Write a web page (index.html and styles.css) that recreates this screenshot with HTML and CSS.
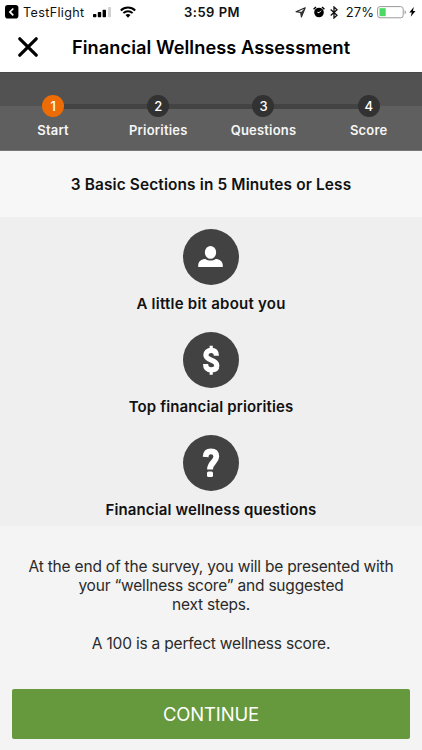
FILE: index.html
```html
<!DOCTYPE html>
<html lang="en">
<head>
<meta charset="utf-8">
<title>Financial Wellness Assessment</title>
<link rel="stylesheet" href="styles.css">
</head>
<body>
<div class="status">
  <div class="status-left">
    <svg class="back" width="14" height="14" viewBox="0 0 14 14"><rect width="13.4" height="13.6" rx="2.8" fill="#000"/><path d="M8.3 3.5 4.9 6.9l3.4 3.4" fill="none" stroke="#fff" stroke-width="1.7"/></svg>
    <span class="app">TestFlight</span>
    <svg class="signal" width="19" height="11" viewBox="0 0 19 11"><rect x="0" y="7" width="3.4" height="3.3" rx=".7"/><rect x="4.8" y="5" width="3.4" height="5.3" rx=".7"/><rect x="9.6" y="2.7" width="3.4" height="7.6" rx=".7"/><rect x="15" y="0" width="3" height="10.3" rx=".7" fill="#d2d2d2"/></svg>
    <svg class="wifi" width="16" height="12" viewBox="0 0 16 12"><g fill="none" stroke="#000" stroke-width="2"><path d="M.8 4.5a10.2 10.2 0 0 1 14.4 0"/><path d="M3.4 7.1a6.5 6.5 0 0 1 9.2 0"/></g><path d="M5.5 9.1a3.6 3.6 0 0 1 5 0L8 11.7z"/></svg>
  </div>
  <div class="time">3:59 PM</div>
  <div class="status-right">
    <svg class="location" width="11" height="11" viewBox="0 0 11 11"><path d="M10.2.8 6.4 10 5.7 5.4 1 4.7z" fill="none" stroke="#222" stroke-width="1.1" stroke-linejoin="round"/><path d="M10.2.8 6.4 10 5.7 5.4z" fill="#333"/></svg>
    <svg class="alarm" width="12" height="12" viewBox="0 0 12 12"><circle cx="6" cy="6.5" r="4.8"/><path d="M.6 3.2 3 1M11.4 3.2 9 1" stroke="#000" stroke-width="1.5"/><path d="M8 4.7 6 6.8 4.4 6.2" fill="none" stroke="#fff" stroke-width="1"/></svg>
    <svg class="bluetooth" width="8" height="13" viewBox="0 0 8 13"><path d="M.7 3.4 7 9.2 4 12V1l3 2.8L.7 9.6" fill="none" stroke="#111" stroke-width="1.3"/></svg>
    <span class="percent">27%</span>
    <svg class="battery" width="30" height="13" viewBox="0 0 30 13"><rect x=".6" y=".6" width="25.6" height="11.2" rx="2.5" fill="#fff" stroke="#999" stroke-width="1"/><rect x="2.5" y="2.2" width="6.2" height="8" fill="#4bd964"/><path d="M27.6 4.2c1.8.8 1.8 3.2 0 4z" fill="#999"/></svg>
    <svg class="bolt" width="7" height="10" viewBox="0 0 7 10"><path d="M4.8 0 .3 5.5h2.5L1.7 9.7 6.5 4H4z"/></svg>
  </div>
</div>
<header class="header">
  <svg class="close" width="20" height="20" viewBox="0 0 20 20"><path d="M1.8 1.8 18.2 18.2M18.2 1.8 1.8 18.2" stroke="#000" stroke-width="3.2" stroke-linecap="round"/></svg>
  <h1>Financial Wellness Assessment</h1>
</header>
<nav class="steps">
  <div class="step active"><span class="dot">1</span><span class="label">Start</span></div>
  <div class="step"><span class="dot">2</span><span class="label">Priorities</span></div>
  <div class="step"><span class="dot">3</span><span class="label">Questions</span></div>
  <div class="step"><span class="dot">4</span><span class="label">Score</span></div>
</nav>
<h2 class="intro">3 Basic Sections in 5 Minutes or Less</h2>
<main class="features">
  <section class="feature">
    <svg width="56" height="56" viewBox="0 0 56 56"><circle cx="28" cy="28" r="28" fill="#424242"/><ellipse cx="27.5" cy="23.4" rx="5.6" ry="6.4" fill="#fff"/><path d="M15.2 38v-1.5c0-4.3 3.3-6.5 7.2-6.5 1.4 1 3.2 1.6 5.1 1.6s3.7-.6 5.1-1.6c3.9 0 7.2 2.2 7.2 6.5V38z" fill="#fff"/></svg>
    <p class="name-about">A little bit about you</p>
  </section>
  <section class="feature">
    <svg width="56" height="56" viewBox="0 0 56 56"><circle cx="28" cy="28" r="28" fill="#424242"/><path d="M33.4 23.8c0-3.6-1.8-5.4-5.2-5.4-3.3 0-5.3 1.8-5.3 4.6 0 6.2 10.9 4.2 10.9 10.5 0 2.8-2 4.4-5.4 4.4-3.7 0-5.8-1.8-5.8-5.8" fill="none" stroke="#fff" stroke-width="5.2"/><path d="M28.2 13.8v4M28.2 38v4.8" stroke="#fff" stroke-width="3.2"/></svg>
    <p class="name-top">Top financial priorities</p>
  </section>
  <section class="feature">
    <svg width="56" height="56" viewBox="0 0 56 56"><circle cx="28" cy="28" r="28" fill="#424242"/><path d="M22.6 22c.2-3.8 2-5.6 5.3-5.6 3.5 0 5.4 1.9 5.4 5.2 0 5.6-6.3 5.6-6.3 12.8" fill="none" stroke="#fff" stroke-width="5.8"/><rect x="24" y="36.6" width="6" height="5.4" rx="1.5" fill="#fff"/></svg>
    <p class="name-questions">Financial wellness questions</p>
  </section>
</main>
<footer class="footer">
  <p class="copy">At the end of the survey, you will be presented with<br>your “wellness score” and suggested<br>next steps.</p>
  <p class="copy perfect">A 100 is a perfect wellness score.</p>
  <button class="continue" type="button">CONTINUE</button>
</footer>
</body>
</html>
```
FILE: styles.css
```css
* { box-sizing: border-box; }
body { margin: 0; height: 750px; overflow: hidden; background: #f4f4f4; color: #111; font-family: Inter, "Liberation Sans", sans-serif; display: flex; flex-direction: column; }
h1, h2, p { margin: 0; white-space: nowrap; }
svg { display: block; flex: none; }
.status { height: 24px; flex: none; background: #fff; display: grid; grid-template-columns: 1fr auto 1fr; align-items: center; padding: 0 6px 0 5px; font-size: 12.6px; color: #111; }
.status-left, .status-right { display: flex; align-items: center; }
.status-right { justify-content: flex-end; }
.app { margin-left: 4px; letter-spacing: .35px; }
.signal { margin-left: 8px; }
.wifi { margin-left: 8px; }
.time { margin-left: 3px; font-size: 13px; font-weight: 600; letter-spacing: .5px; }
.alarm { margin-left: 7px; }
.bluetooth { margin-left: 5px; }
.percent { margin-left: 8px; font-size: 13px; letter-spacing: .1px; }
.battery { margin-left: 3px; }
.bolt { margin-left: 2px; }
.header { height: 48px; flex: none; background: #fff; display: flex; align-items: center; padding: 0 0 2px 18px; }
.header h1 { margin-left: 34px; font-size: 18.2px; font-weight: 600; line-height: 24px; letter-spacing: .07px; color: #000; }
.steps { height: 79px; flex: none; display: grid; grid-template-columns: repeat(4, 105.2px); padding-left: .5px; padding-top: 22px; border-top: 1px solid #484848; border-bottom: 1px solid #777; background: linear-gradient(#535253 33px, #5f5f5f 33px); }
.step { display: flex; flex-direction: column; align-items: center; background: linear-gradient(#434343, #434343) 0 9px / 100% 5px no-repeat; }
.step:first-child { background-position: 53px 9px; }
.step:last-child { background-size: 50% 5px; }
.dot { width: 22px; height: 22px; border-radius: 50%; background: #323232; color: #fff; font-size: 13px; font-weight: 500; line-height: 22px; text-align: center; }
.active .dot { background: #ee6c05; }
.label { margin-top: 4px; font-size: 13px; line-height: 18px; font-weight: 600; letter-spacing: .2px; color: #f6f6f6; }
.intro { height: 66px; flex: none; background: #f7f7f7; font-size: 15.4px; line-height: 67px; font-weight: 600; letter-spacing: .14px; text-align: center; }
.features { height: 309px; flex: none; background: #efefef; padding-top: 12px; }
.feature { height: 103px; display: flex; flex-direction: column; align-items: center; }
.feature p { margin-top: 9px; font-size: 15px; line-height: 20px; font-weight: 600; letter-spacing: .12px; }
.feature .name-about { letter-spacing: .24px; }
.footer { height: 224px; padding: 31px 12px 0; text-align: center; }
.copy { font-size: 15.5px; line-height: 19px; letter-spacing: -.2px; color: #2a2a2a; }
.perfect { margin-top: 20px; }
.continue { display: block; width: 398px; height: 50px; margin-top: 36px; padding: 0; border: 0; border-radius: 2px; background: #66993d; color: #fff; font: 400 18.5px/50px Inter, "Liberation Sans", sans-serif; letter-spacing: -.15px; }
```
